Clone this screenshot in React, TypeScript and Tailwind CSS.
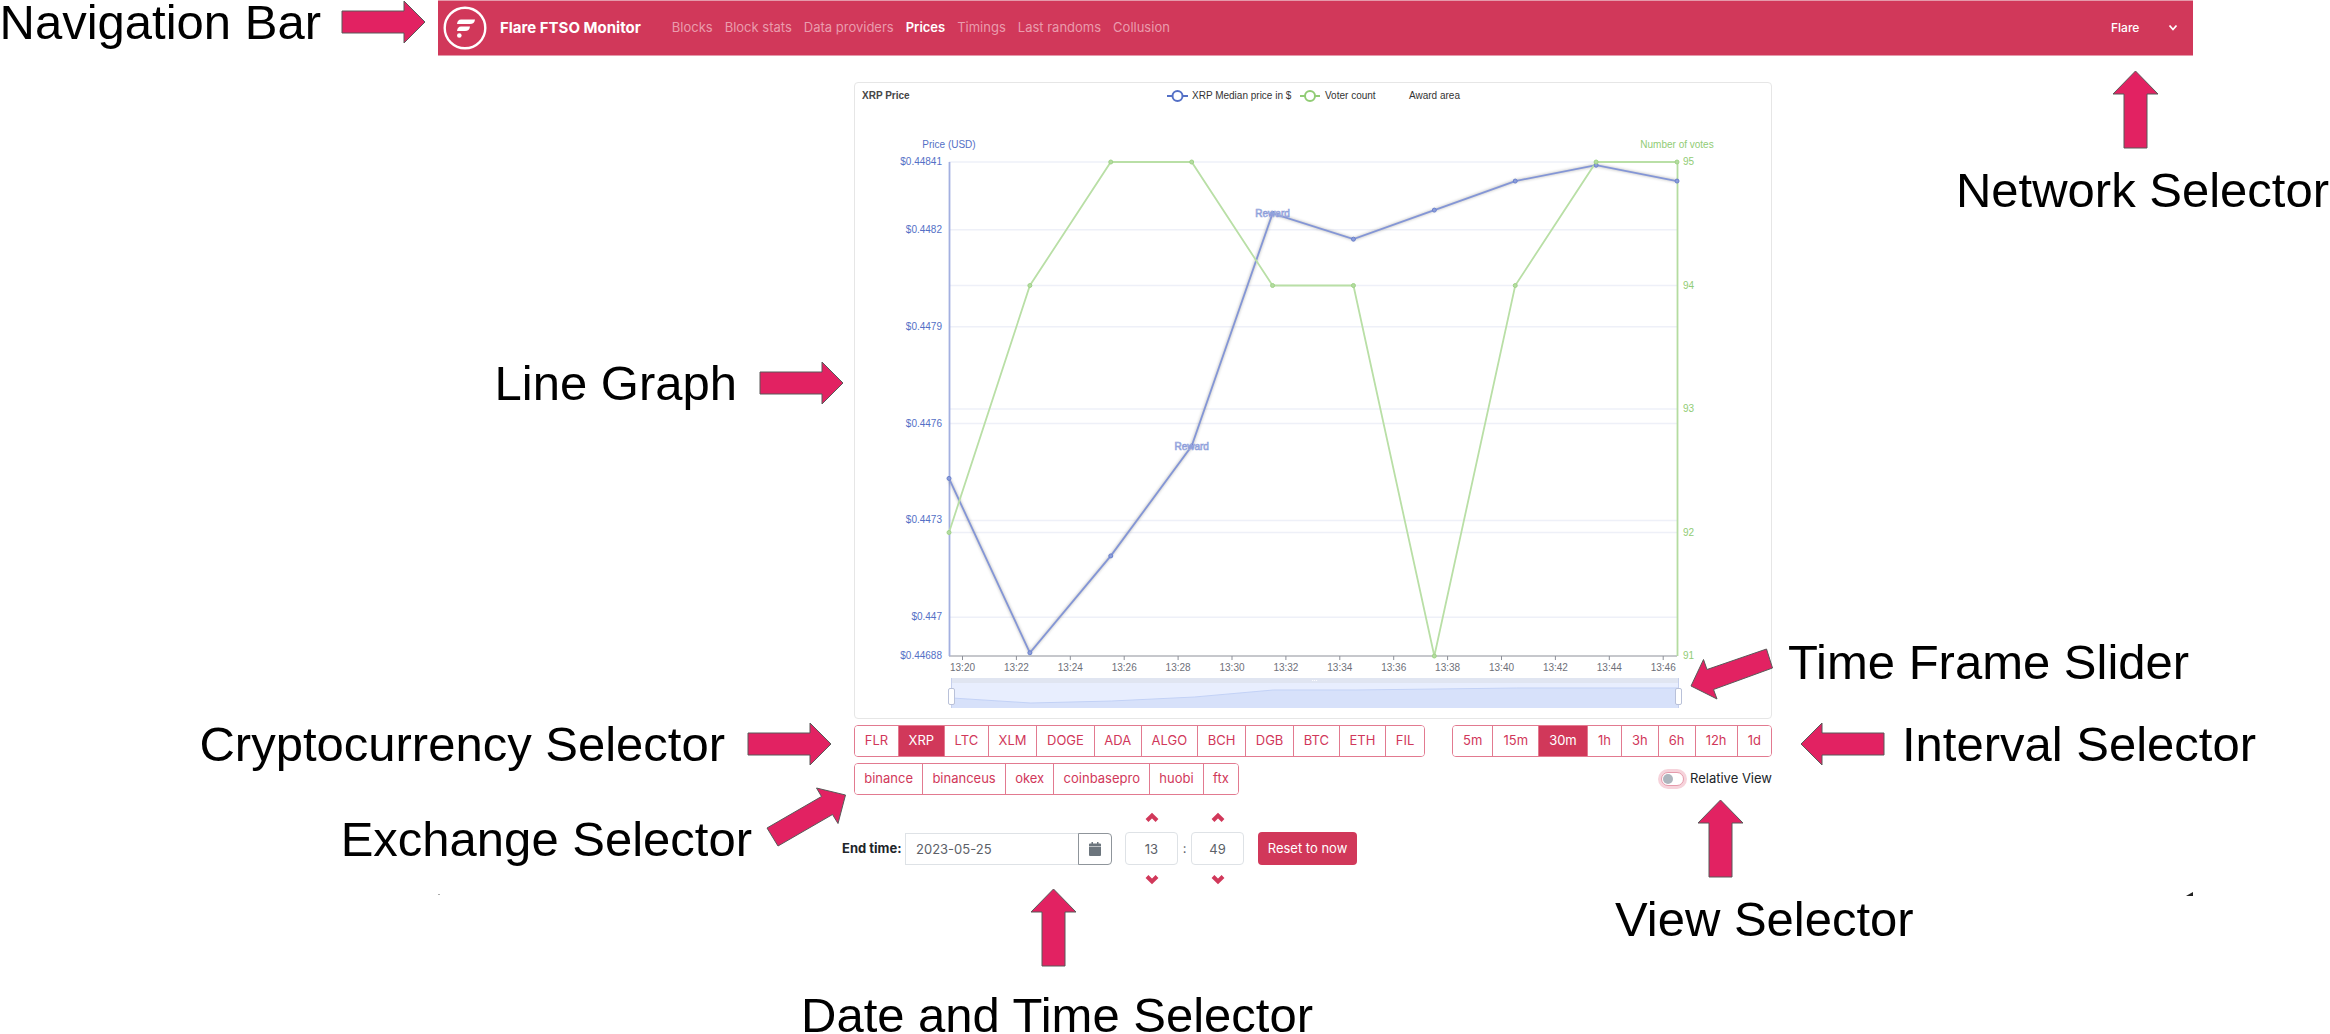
import { useState } from "react";
import type { ReactNode } from "react";

const times = ["13:20", "13:22", "13:24", "13:26", "13:28", "13:30", "13:32", "13:34", "13:36", "13:38", "13:40", "13:42", "13:44", "13:46"];
const prices = [0.44743, 0.44689, 0.44719, 0.44753, 0.448251, 0.448171, 0.448261, 0.448351, 0.4484, 0.448351];
const votes = [92, 94, 95, 95, 94, 94, 91, 94, 95, 95];
const priceTicks = [0.44841, 0.4482, 0.4479, 0.4476, 0.4473, 0.447, 0.44688];
const voteTicks = [95, 94, 93, 92, 91];

const LEFT = 94;
const RIGHT = 822;
const TOP = 79;
const BOTTOM = 573;
const pointX = (i: number) => LEFT + ((RIGHT - LEFT) * i) / 9;
const priceY = (p: number) => TOP + ((0.44841 - p) / 0.00153) * (BOTTOM - TOP);
const voteY = (v: number) => TOP + ((95 - v) / 4) * (BOTTOM - TOP);

const coins = ["FLR", "XRP", "LTC", "XLM", "DOGE", "ADA", "ALGO", "BCH", "DGB", "BTC", "ETH", "FIL"];
const exchanges = ["binance", "binanceus", "okex", "coinbasepro", "huobi", "ftx"];
const intervals = ["5m", "15m", "30m", "1h", "3h", "6h", "12h", "1d"];
const links = ["Blocks", "Block stats", "Data providers", "Prices", "Timings", "Last randoms", "Collusion"];

function Label({ children }: { children: ReactNode }) {
  return <p className="text-[49px] leading-9 whitespace-nowrap text-black">{children}</p>;
}

function SideArrow({ left = false }: { left?: boolean }) {
  const d = left
    ? "M1 22 L22 1 V11 H84 V33 H22 V43 Z"
    : "M84 22 L63 1 V11 H1 V33 H63 V43 Z";
  return (
    <svg className="h-11 w-[85px] shrink-0" viewBox="0 0 85 44" aria-hidden="true">
      <path d={d} fill="#e22262" stroke="#595959" />
    </svg>
  );
}

function UpArrow() {
  return (
    <svg className="h-[79px] w-[47px] shrink-0" viewBox="0 0 47 79" aria-hidden="true">
      <path d="M23.5 1 L46 24 H35 V78 H12 V24 H1 Z" fill="#e22262" stroke="#595959" />
    </svg>
  );
}

function Chart() {
  const pricePoints = prices.map((p, i) => `${pointX(i)},${priceY(p)}`).join(" ");
  const votePoints = votes.map((v, i) => `${pointX(i)},${voteY(v)}`).join(" ");
  return (
    <svg className="block w-full" viewBox="0 0 916 595" fontSize="10" role="img" aria-label="XRP price and voter count">
      <defs>
        <filter id="soft" x="-5%" y="-20%" width="110%" height="140%">
          <feGaussianBlur stdDeviation="1.5" />
        </filter>
      </defs>
      <text x="7" y="16" fontWeight="bold" fill="#464646">XRP Price</text>
      <g strokeWidth="2" fill="#fff">
        <path d="M312 13 H333" stroke="#5470c6" />
        <circle cx="322.5" cy="13" r="5" stroke="#5470c6" />
        <path d="M445 13 H465" stroke="#91cc75" />
        <circle cx="455" cy="13" r="5" stroke="#91cc75" />
      </g>
      <g fill="#333">
        <text x="337" y="16">XRP Median price in $</text>
        <text x="470" y="16">Voter count</text>
        <text x="554" y="16">Award area</text>
      </g>
      <text x="94" y="65" textAnchor="middle" fill="#5470c6">Price (USD)</text>
      <text x="822" y="65" textAnchor="middle" fill="#91cc75">Number of votes</text>
      <g stroke="#eef0f8" strokeWidth="1.5">
        {priceTicks.slice(0, 6).map((p) => (
          <path key={p} d={`M${LEFT} ${priceY(p)} H${RIGHT}`} />
        ))}
        {voteTicks.slice(1, 4).map((v) => (
          <path key={v} d={`M${LEFT} ${voteY(v)} H${RIGHT}`} />
        ))}
      </g>
      <g textAnchor="end" fill="#5470c6">
        {priceTicks.map((p) => (
          <text key={p} x="87" y={priceY(p) + 3}>{`$${p}`}</text>
        ))}
      </g>
      <g fill="#91cc75">
        {voteTicks.map((v) => (
          <text key={v} x="828" y={voteY(v) + 3}>{v}</text>
        ))}
      </g>
      <path d={`M${LEFT} ${BOTTOM} H${RIGHT}`} stroke="#8d9099" />
      {times.map((t, i) => (
        <g key={t}>
          <path d={`M${107.5 + i * 53.9} ${BOTTOM} v4`} stroke="#8d9099" />
          <text x={107.5 + i * 53.9} y="588" textAnchor="middle" fill="#6e7079">{t}</text>
        </g>
      ))}
      <path d={`M${LEFT + 0.5} ${TOP} V${BOTTOM}`} stroke="#a3b0e0" strokeWidth="1.8" />
      <path d={`M${RIGHT + 0.5} ${TOP} V${BOTTOM}`} stroke="#b4dca0" strokeWidth="1.8" />
      <polyline points={pricePoints} fill="none" stroke="#000" strokeOpacity="0.3" strokeWidth="2" filter="url(#soft)" />
      <polyline points={pricePoints} fill="none" stroke="#8496d6" strokeWidth="1.8" />
      <polyline points={votePoints} fill="none" stroke="#b9dfa6" strokeWidth="1.8" />
      {prices.map((p, i) => (
        <circle key={i} cx={pointX(i)} cy={priceY(p)} r="2" fill="#8c9ddb" stroke="#6b82cd" />
      ))}
      {votes.map((v, i) => (
        <circle key={i} cx={pointX(i)} cy={voteY(v)} r="2" fill="#b4dca0" stroke="#a0d388" />
      ))}
      <g textAnchor="middle" fill="#edf0fa" stroke="#8f9fda" strokeWidth="0.7">
        <text x={pointX(3)} y="367">Reward</text>
        <text x={pointX(4)} y="134">Reward</text>
      </g>
    </svg>
  );
}

function RangeHandle({ label, initial }: { label: string; initial: number }) {
  return (
    <input
      type="range"
      aria-label={label}
      defaultValue={initial}
      className="pointer-events-none absolute -inset-x-1 top-2 h-5 appearance-none bg-transparent [&::-webkit-slider-thumb]:pointer-events-auto [&::-webkit-slider-thumb]:h-[17px] [&::-webkit-slider-thumb]:w-[7px] [&::-webkit-slider-thumb]:appearance-none [&::-webkit-slider-thumb]:rounded-xs [&::-webkit-slider-thumb]:border [&::-webkit-slider-thumb]:border-[#b9c1d9] [&::-webkit-slider-thumb]:bg-white"
    />
  );
}

function TimeFrame() {
  return (
    <div className="relative mr-[10%] mb-[10px] ml-[10.5%] h-[30px] border-x border-[#c5cfec] bg-[#e8eefe]">
      <svg className="block h-full w-full" viewBox="0 0 728 30" preserveAspectRatio="none" aria-hidden="true">
        <rect width="728" height="5" fill="#e0e5f1" />
        <path d="M0 20 L79 25 L160 23 L243 19 L322 12 L404 12 L566 10 H728 V30 H0 Z" fill="#d7e1fa" />
        <path d="M0 20 L79 25 L160 23 L243 19 L322 12 L404 12 L566 10 H728" fill="none" stroke="#c3d2f6" />
        <path d="M361 2.500 h5" stroke="#fff" strokeDasharray="1 1" />
      </svg>
      <RangeHandle label="Time frame start" initial={0} />
      <RangeHandle label="Time frame end" initial={100} />
    </div>
  );
}

function ButtonGroup({ items, initial, label, size }: { items: string[]; initial?: string; label: string; size: string }) {
  const [active, setActive] = useState(initial);
  return (
    <div role="group" aria-label={label} className={`flex h-8 overflow-hidden rounded border border-[#e27a90] ${size}`}>
      {items.map((item, i) => (
        <button
          key={item}
          type="button"
          aria-pressed={active === item}
          onClick={() => setActive(item)}
          className={`grow text-[13px] ${i > 0 ? "border-l border-[#e27a90]" : ""} ${
            active === item ? "bg-[#d1385a] text-white" : "bg-white text-[#d1385a]"
          }`}
        >
          {item}
        </button>
      ))}
    </div>
  );
}

function Chevron({ down = false }: { down?: boolean }) {
  return (
    <svg className="h-[14px] w-[14px]" viewBox="0 0 14 14" fill="none" stroke="#d1385a" strokeWidth="4" aria-hidden="true">
      <path d={down ? "M2 4.500 L7 9.500 L12 4.500" : "M2 9.500 L7 4.500 L12 9.500"} />
    </svg>
  );
}

function Stepper({ label, initial, max }: { label: string; initial: number; max: number }) {
  const [value, setValue] = useState(initial);
  return (
    <div className="flex flex-col items-center">
      <button type="button" aria-label={`Increase ${label}`} onClick={() => setValue((value + 1) % max)}>
        <Chevron />
      </button>
      <input
        aria-label={label}
        value={value}
        onChange={(e) => setValue(Number(e.target.value) || 0)}
        className="my-[7px] h-[33px] w-[53px] rounded border border-[#dee2e6] text-center text-[13px] text-[#5c6168]"
      />
      <button type="button" aria-label={`Decrease ${label}`} onClick={() => setValue((value + max - 1) % max)}>
        <Chevron down />
      </button>
    </div>
  );
}

function NavBar() {
  return (
    <nav className="flex h-14 items-center border-y border-[#e59aab] bg-[#d1385a] pr-[14px] pl-[5px] font-[Inter,sans-serif] text-[13px]">
      <a href="#" className="flex items-center gap-[13px] text-[15px] font-bold whitespace-nowrap text-white">
        <svg className="size-11" viewBox="0 0 44 44" aria-hidden="true">
          <circle cx="22" cy="22" r="20.300" fill="none" stroke="#fff" strokeWidth="2.400" />
          <path d="M18 13.500 H32 Q31.500 18 27 18 H14 Q14.500 13.500 18 13.500 Z" fill="#fff" />
          <path d="M18 20.500 H27 Q26.500 25 22 25 H14 Q14.500 20.500 18 20.500 Z" fill="#fff" />
          <circle cx="16.300" cy="29.500" r="2.300" fill="#fff" />
        </svg>
        Flare FTSO Monitor
      </a>
      <ul className="ml-[31px] flex gap-3 whitespace-nowrap">
        {links.map((link) => (
          <li key={link}>
            <a href="#" className={link === "Prices" ? "font-semibold text-white" : "text-[#ea9cad]"}>
              {link}
            </a>
          </li>
        ))}
      </ul>
      <div className="relative ml-auto flex items-center">
        <select aria-label="Network" className="w-[68px] appearance-none bg-transparent text-[12px] font-medium text-white">
          <option>Flare</option>
          <option>Songbird</option>
        </select>
        <svg className="pointer-events-none absolute right-0 h-3 w-3" viewBox="0 0 12 12" fill="none" stroke="#fff" strokeWidth="1.800" aria-hidden="true">
          <path d="M2.500 3.500 L6 7.500 L9.500 3.500" />
        </svg>
      </div>
    </nav>
  );
}

export default function App() {
  const [relative, setRelative] = useState(false);
  return (
    <div className="overflow-hidden bg-white font-['Liberation_Sans',Arial,sans-serif]">
      <header className="grid grid-cols-[minmax(0,438fr)_minmax(0,1755fr)_minmax(0,137fr)]">
        <div className="flex h-11 items-center justify-end gap-[20px] pr-3">
          <Label>Navigation Bar</Label>
          <SideArrow />
        </div>
        <NavBar />
      </header>

      <main className="grid grid-cols-[minmax(0,854fr)_minmax(0,918fr)_minmax(0,558fr)]">
        <div className="flex flex-col items-end pt-[305px]">
          <div className="flex items-center gap-[22px] pr-[10px]">
            <Label>Line Graph</Label>
            <SideArrow />
          </div>
          <div className="mt-[317px] flex items-center gap-[22px] pr-[22px]">
            <Label>Cryptocurrency Selector</Label>
            <SideArrow />
          </div>
          <div className="mt-[21px] flex items-end gap-[14px] pr-2">
            <Label>Exchange Selector</Label>
            <svg className="mb-[10px] h-[60px] w-20 shrink-0" viewBox="0 0 80 60" aria-hidden="true">
              <path d="M1 41 L55.500 9.500 L50.500 1 L79.500 8 L72 36.500 L66.500 27.500 L12 59 Z" fill="#e22262" stroke="#595959" />
            </svg>
          </div>
        </div>

        <div className="pt-[26px] font-[Inter,sans-serif]">
          <section className="rounded border border-[#e6e6e6] font-['Liberation_Sans',Arial,sans-serif]">
            <Chart />
            <TimeFrame />
          </section>

          <div className="mt-[6px] flex justify-between">
            <ButtonGroup label="Cryptocurrency" items={coins} initial="XRP" size="w-[571px]" />
            <ButtonGroup label="Interval" items={intervals} initial="30m" size="w-[320px]" />
          </div>
          <div className="mt-[6px] flex items-center justify-between">
            <ButtonGroup label="Exchange" items={exchanges} size="w-[385px]" />
            <label className="flex items-center gap-[6px] text-[13px] text-[#212529]">
              <input
                type="checkbox"
                role="switch"
                checked={relative}
                onChange={(e) => setRelative(e.target.checked)}
                className="h-[14px] w-[23px] appearance-none rounded-full border border-[#e59aab] bg-white p-px ring-3 ring-[#f6d3db] before:block before:size-[10px] before:rounded-full before:bg-[#adb5bd] checked:before:translate-x-[9px]"
              />
              Relative View
            </label>
          </div>

          <div className="flex items-start justify-between">
            <form className="mt-[16px] -ml-3 flex items-center text-[13px] text-[#5c6168]" onSubmit={(e) => e.preventDefault()}>
              <label htmlFor="end-date" className="w-[63px] font-bold whitespace-nowrap text-[#212529]">End time:</label>
              <input id="end-date" defaultValue="2023-05-25" className="h-8 w-[174px] border border-[#dee2e6] px-[10px]" />
              <button type="button" aria-label="Open calendar" className="-ml-px flex h-8 w-[34px] items-center justify-center rounded-r border border-[#8f959b]">
                <svg className="h-[14px] w-3" viewBox="0 0 12 14" fill="#6c757d" aria-hidden="true">
                  <path d="M2.500 0 h1.500 v1.500 h4 V0 h1.500 v1.500 H11 q1 0 1 1 V4.200 H0 V2.500 q0 -1 1 -1 h1.500 Z" />
                  <path d="M0 4.700 H12 V13 q0 1 -1 1 H1 q-1 0 -1 -1 Z" />
                </svg>
              </button>
              <div className="ml-[13px] flex items-center">
                <Stepper label="Hour" initial={13} max={24} />
                <span className="w-[13px] text-center">:</span>
                <Stepper label="Minute" initial={49} max={60} />
              </div>
              <button type="submit" className="ml-[14px] h-[33px] w-[99px] rounded bg-[#d1385a] whitespace-nowrap text-white">Reset to now</button>
            </form>
            <div className="mt-1 mr-[28px]">
              <UpArrow />
            </div>
          </div>
        </div>

        <div className="flex flex-col pt-[14px]">
          <div className="flex flex-col items-end gap-[23px]">
            <div className="mr-[171px]">
              <UpArrow />
            </div>
            <div className="mr-px">
              <Label>Network Selector</Label>
            </div>
          </div>
          <div className="relative mt-[436px] -ml-[82px] flex items-start gap-[15px]">
            <svg className="mt-1 h-[52px] w-[83px] shrink-0" viewBox="0 0 83 52" aria-hidden="true">
              <path d="M1 38 L13.500 11.500 L17 21.500 L76.500 1 L82.500 20 L23.500 41.500 L27 51 Z" fill="#e22262" stroke="#595959" />
            </svg>
            <Label>Time Frame Slider</Label>
          </div>
          <div className="mt-[22px] ml-[28px] flex items-center gap-[17px]">
            <SideArrow left />
            <Label>Interval Selector</Label>
          </div>
        </div>
      </main>

      <footer className="mt-[2px] grid grid-cols-[minmax(0,438fr)_minmax(0,363fr)_minmax(0,814fr)_minmax(0,715fr)]">
        <div />
        <svg className="mt-[6px] h-0.5 w-0.5" viewBox="0 0 2 2" aria-hidden="true">
          <rect width="2" height="1" fill="#aaa" />
        </svg>
        <div className="flex flex-col items-start gap-[30px]">
          <div className="ml-[229px]">
            <UpArrow />
          </div>
          <Label>Date and Time Selector</Label>
        </div>
        <div className="flex items-start justify-between pr-[137px]">
          <div className="mt-[13px]">
            <Label>View Selector</Label>
          </div>
          <svg className="mt-1 h-1 w-[7px]" viewBox="0 0 7 4" aria-hidden="true">
            <path d="M0 4 L7 0 V4 Z" fill="#222" />
          </svg>
        </div>
      </footer>
    </div>
  );
}
